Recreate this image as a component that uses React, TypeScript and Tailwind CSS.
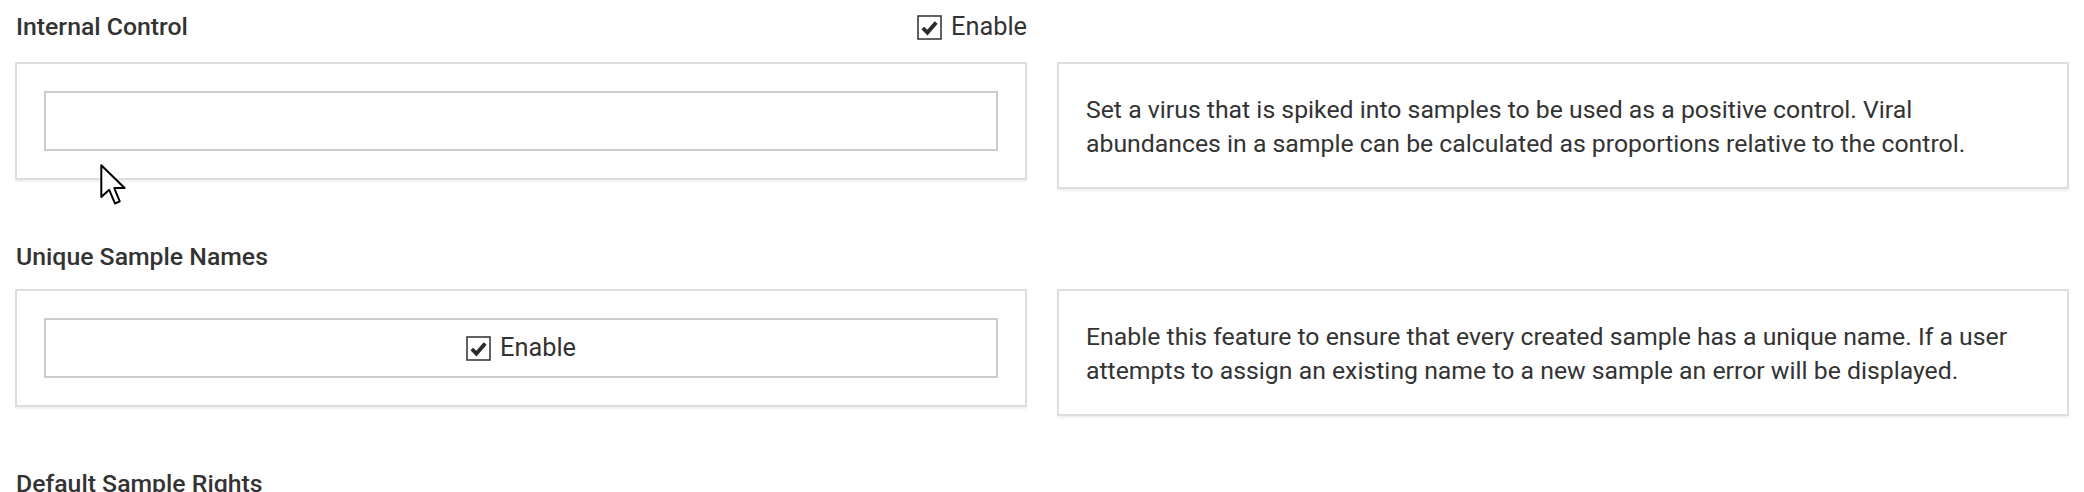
import React from "react";

function CheckIcon() {
  return (
    <svg width="25" height="25" viewBox="0 0 25 25" className="shrink-0">
      <rect x="1" y="1" width="23" height="23" fill="#fff" stroke="#3b3b3b" strokeWidth="1.6" />
      <path d="M5.8 13 L10.4 17.6 L19.2 7.4" fill="none" stroke="#2a2a2a" strokeWidth="3.8" strokeLinejoin="miter" />
    </svg>
  );
}

function EnableToggle() {
  return (
    <label className="flex items-center gap-[9px] text-[25.33px] leading-[34px] text-[#333]">
      <CheckIcon />
      <span>Enable</span>
    </label>
  );
}

function Cursor() {
  return (
    <svg
      width="31"
      height="44"
      viewBox="0 0 14 20"
      className="pointer-events-none absolute left-[99px] top-[163px]"
    >
      <path
        d="M1 1 L1 15.5 L4.6 12.2 L7.2 18.4 L9.4 17.4 L6.9 11.4 L11.6 11.4 Z"
        fill="#fff"
        stroke="#000"
        strokeWidth="0.9"
        strokeLinejoin="round"
      />
    </svg>
  );
}

export default function App() {
  const panel = "border-2 border-[#dedede] bg-white shadow-[0_2px_2px_rgba(0,0,0,0.06)]";
  const heading = "pl-px text-[24.8px] font-medium leading-[30px] text-[#333]";
  const body = "text-[24.8px] leading-[34px] text-[#333]";

  return (
    <div
      className="relative h-[492px] overflow-hidden bg-white px-[15px] text-[#333]"
      style={{ fontFamily: "Roboto, 'Liberation Sans', sans-serif" }}
    >
      {/* Internal Control */}
      <section className="pt-[10px]">
        <div className="grid grid-cols-2 gap-x-[30px]">
          <div className="flex h-[34px] items-center justify-between">
            <h3 className={heading}>Internal Control</h3>
            <EnableToggle />
          </div>
        </div>
        <div className="mt-[18px] grid grid-cols-2 items-start gap-x-[30px]">
          <div className={`${panel} p-[27px]`}>
            <input className="block h-[60px] w-full border-2 border-[#cccccc] px-3 outline-none" />
          </div>
          <div className={`${panel} px-[27px] pt-[29px] pb-[26px]`}>
            <p className={body}>
              Set a virus that is spiked into samples to be used as a positive control. Viral abundances in a sample
              can be calculated as proportions relative to the control.
            </p>
          </div>
        </div>
      </section>

      {/* Unique Sample Names */}
      <section className="mt-[53px]">
        <h3 className={heading}>Unique Sample Names</h3>
        <div className="mt-[17px] grid grid-cols-2 items-start gap-x-[30px]">
          <div className={`${panel} p-[27px]`}>
            <div className="flex h-[60px] items-center justify-center border-2 border-[#cccccc]">
              <EnableToggle />
            </div>
          </div>
          <div className={`${panel} px-[27px] pt-[29px] pb-[26px]`}>
            <p className={body}>
              Enable this feature to ensure that every created sample has a unique name. If a user attempts to assign
              an existing name to a new sample an error will be displayed.
            </p>
          </div>
        </div>
      </section>

      {/* Default Sample Rights */}
      <section className="mt-[53px]">
        <h3 className={heading}>Default Sample Rights</h3>
      </section>

      <Cursor />
    </div>
  );
}
